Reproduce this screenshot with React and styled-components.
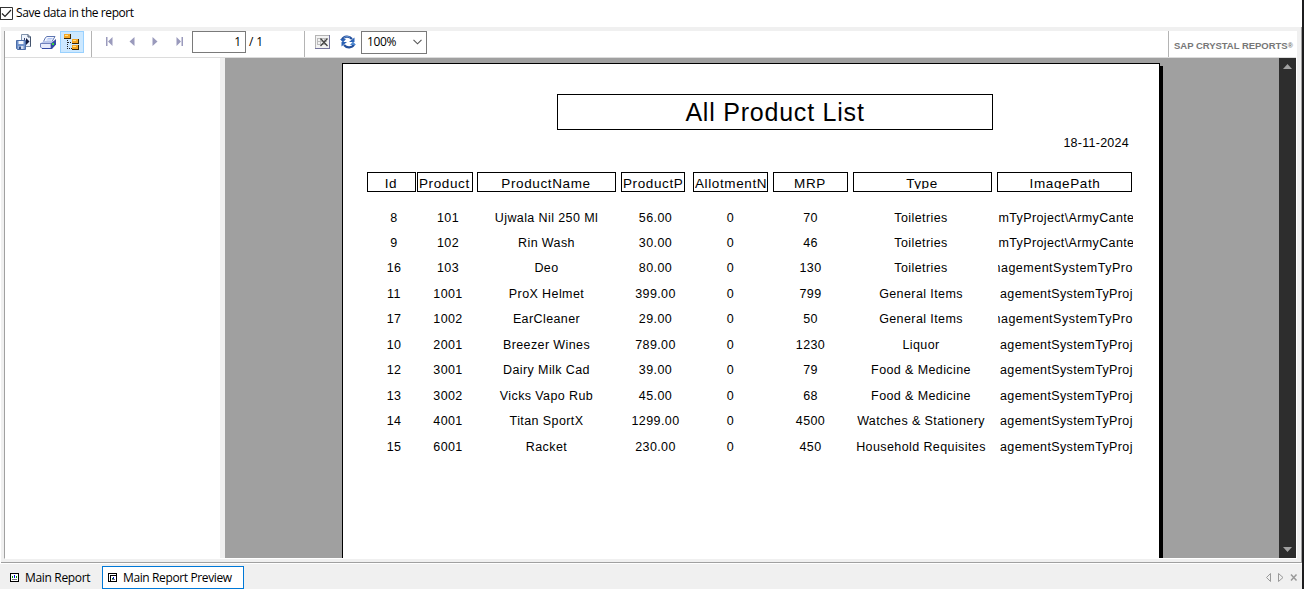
import React from 'react';
import styled, { createGlobalStyle } from 'styled-components';

const Global = createGlobalStyle`
  * { box-sizing: border-box; }
  body { margin: 0; overflow: hidden; background: #fff; }
`;
const ui = `"Open Sans", "Noto Sans", sans-serif`;
const arial = `"Liberation Sans", Arial, sans-serif`;

const Screen = styled.div`
  width: 1304px; height: 589px; display: flex; flex-direction: column;
  border-right: 2px solid #1c1c1e; background: #fff; overflow: hidden;
  font: 12px ${ui}; color: #000;
`;
const Option = styled.label`
  height: 27px; flex: none; display: flex; align-items: center; gap: 3px; padding-bottom: 1px;
  svg { display: block; }
`;
const Label = styled.span`
  white-space: pre; letter-spacing: ${p => p.$ls || 0}px; line-height: 16px;
`;
const Viewer = styled.div`
  height: 536px; flex: none; margin-left: 1px; padding: 4px 4px 3px 3px;
  background: #f0f0f0; border-right: 1px solid #a0a0a0; border-bottom: 1px solid #a0a0a0;
  display: flex; flex-direction: column;
`;
const Inset = styled.div`
  height: 528px; border-left: 1px solid #a0a0a0; border-bottom: 1px solid #fff;
  border-right: 1px solid #fff; display: flex; flex-direction: column;
`;
const Toolbar = styled.div`
  height: 27px; flex: none; background: #fff; border-bottom: 1px solid #dcdcdc;
  display: flex; align-items: stretch;
`;
const Group = styled.div`
  width: ${p => p.$w}px; display: flex; align-items: flex-start;
  padding-left: ${p => p.$pad}px; border-right: 1px solid #b4b4b4;
`;
const Tool = styled.span`
  width: ${p => p.$w || 24}px; height: 22px; display: flex; align-items: center; justify-content: center;
  border: 1px solid ${p => (p.$on ? '#99d1ff' : 'transparent')};
  background: ${p => (p.$on ? '#cce8ff' : 'transparent')};
  svg { display: block; flex: none; }
`;
const Field = styled.span`
  width: ${p => p.$w}px; height: ${p => p.$h}px; border: 1px solid #7a7a7a; background: #fff;
  display: flex; align-items: center; justify-content: ${p => p.$justify};
  padding: 0 4px 1px 5px; margin-right: 3px;
`;
const Pages = styled.span`
  height: 22px; display: flex; align-items: center;
`;
const Brand = styled.div`
  flex: 1; padding: 8px 0 0 5px;
  font: bold 9.5px/13px ${arial}; color: #777; white-space: nowrap; letter-spacing: -.03px;
  sup { font-size: 7px; line-height: 0; vertical-align: 1px; }
`;
const Body = styled.div`
  flex: 1; min-height: 0; display: flex;
`;
const Tree = styled.div`width: 215px; background: #fff;`;
const Splitter = styled.div`width: 5px; background: #f0f0f0;`;
const Canvas = styled.div`
  flex: 1; background: #a0a0a0; padding: 5px 0 0 117px; overflow: hidden;
`;
const Scrollbar = styled.div`
  width: 17px; background: #2d2d2d; display: flex; flex-direction: column;
  justify-content: space-between; align-items: center; padding: 6px 0 6px;
  svg { display: block; }
`;
const Paper = styled.div`
  width: 818px; height: 520px; background: #fff; border: 1px solid #000; border-bottom: 0;
  box-shadow: 3px 3px 0 #000; padding: 30px 0 0 24px; font-family: ${arial};
`;
const Title = styled.div`
  margin-left: 190px; width: 436px; height: 36px; border: 1px solid #000;
  text-align: center; font-size: 25px; line-height: 35px; letter-spacing: .78px;
`;
const PrintDate = styled.div`
  width: 762px; text-align: right; font-size: 12.5px; letter-spacing: .26px;
  height: 42px; line-height: 26px;
`;
const Row = styled.div`
  display: grid; grid-template-columns: 50px 60px 144px 72px 80px 80px 144px 136px;
  height: ${p => p.$h}px;
`;
const HeadCell = styled.div`
  width: ${p => p.$w}px; height: 20px; border: 1px solid #000; padding: 0 1px; display: flex;
  padding-right: ${p => p.$trim || 0}px;
`;
const HeadText = styled.span`
  flex: 1; height: 16px; overflow: hidden; white-space: nowrap;
  text-align: ${p => (p.$cut ? 'left' : 'center')};
  font-size: 13.5px; line-height: 21px; letter-spacing: .62px;
`;
const Rows = styled.div`padding-top: 13.6px;`;
const Cell = styled.div`
  width: ${p => p.$w}px; padding-left: ${p => p.$shift || 0}px; text-align: center;
  white-space: nowrap; font-size: 12.5px; line-height: 25px; letter-spacing: .4px;
`;
const PathCell = styled.div`
  width: 135px; margin-left: 1px; overflow: hidden; white-space: nowrap;
  font-size: 12.5px; line-height: 25px; letter-spacing: ${p => p.$ls}px;
  text-indent: ${p => p.$indent}px;
`;
const Tabs = styled.div`
  flex: 1; background: #f0f0f0; border-top: 1px solid #fff; padding: 2px 4px 0 2px;
  display: flex; align-items: flex-start;
`;
const Tab = styled.div`
  width: ${p => p.$w}px; height: 23px; display: flex; align-items: center; gap: 6px;
  padding-left: ${p => (p.$on ? 5 : 7)}px;
  background: ${p => (p.$on ? '#fff' : 'transparent')};
  border: 1px solid ${p => (p.$on ? '#0078d7' : 'transparent')};
  svg { display: block; }
`;
const TabNav = styled.div`
  margin: 6px 0 0 auto; svg { display: block; }
`;

const columns = [
  { name: 'Id', w: 49, body: 49, shift: 5, trim: 2 },
  { name: 'Product', w: 56, body: 58, shift: 4, cut: true },
  { name: 'ProductName', w: 139, body: 139, trim: 2 },
  { name: 'ProductP', w: 64, body: 65, shift: 4, cut: true },
  { name: 'AllotmentN', w: 75, body: 75, cut: true },
  { name: 'MRP', w: 75, body: 75, trim: 2 },
  { name: 'Type', w: 139, body: 136, trim: 2 },
  { name: 'ImagePath', w: 135, body: 135 },
];
const P1 = ['mTyProject\\ArmyCanteen', 0.5, 0.37];
const P2 = ['nagementSystemTyPro', -4.5, 0.5];
const P3 = ['agementSystemTyProj', 2, 0.37];
const products = [
  ['8', '101', 'Ujwala Nil 250 Ml', '56.00', '0', '70', 'Toiletries', P1],
  ['9', '102', 'Rin Wash', '30.00', '0', '46', 'Toiletries', P1],
  ['16', '103', 'Deo', '80.00', '0', '130', 'Toiletries', P2],
  ['11', '1001', 'ProX Helmet', '399.00', '0', '799', 'General Items', P3],
  ['17', '1002', 'EarCleaner', '29.00', '0', '50', 'General Items', P2],
  ['10', '2001', 'Breezer Wines', '789.00', '0', '1230', 'Liquor', P3],
  ['12', '3001', 'Dairy Milk Cad', '39.00', '0', '79', 'Food & Medicine', P3],
  ['13', '3002', 'Vicks Vapo Rub', '45.00', '0', '68', 'Food & Medicine', P3],
  ['14', '4001', 'Titan SportX', '1299.00', '0', '4500', 'Watches & Stationery', P3],
  ['15', '6001', 'Racket', '230.00', '0', '450', 'Household Requisites', P3],
];

const CheckIcon = () => (
  <svg width="13" height="13" viewBox="0 0 13 13" fill="none">
    <path d="M0 .5H12.5V12.5H0M.5 0V13" stroke="#333" />
    <path d="M2 6.5L5 9.5L11 3" stroke="#222" strokeWidth="1.2" />
  </svg>
);
const ExportIcon = () => (
  <svg width="16" height="16" viewBox="0 0 16 16">
    <path d="M5.5.5H12L14.5 3V12.5H5.5Z" fill="#edf3fc" stroke="#8093ad" />
    <path d="M12 .5V3H15M14.5 3V12.5" fill="none" stroke="#44546e" />
    <path d="M10 4L13.5 7.5L10 11Z" fill="#111b40" />
    <path d="M8 4H9V6H8Z" fill="#3a4a78" />
    <path d="M.5 6.5H9.5V15.5H1.5L.5 14.5Z" fill="#6f92cb" stroke="#4a6ca8" />
    <path d="M2.5 7H7.5V10H2.5Z" fill="#f5f8ff" />
    <path d="M2.5 12H7.5V15H2.5Z" fill="#d5def0" />
    <path d="M3 12.5H5V15H3Z" fill="#304f88" />
  </svg>
);
const PrintIcon = () => (
  <svg width="17" height="13" viewBox="0 0 17 13">
    <path d="M5.5 1.5L7 .5H15L12 5.5H3.5Z" fill="#f4f7ff" stroke="#4d66a8" strokeWidth=".9" />
    <path d="M7.5 2.5H12.5M6.5 4H11.5" stroke="#9db5f0" strokeWidth=".8" />
    <path d="M0 7.5L4 5H14.5L12 7.5Z" fill="#b9c5ea" />
    <path d="M.5 7.5H11V12.5H2L.5 11Z" fill="#e6eafb" stroke="#6f80bc" />
    <path d="M11 7.5L16 3V8.5L12 13H11Z" fill="#3449a4" />
    <path d="M2 12.5H12" stroke="#3449a4" />
    <path d="M12 7H14V9H12Z" fill="#35d53c" />
  </svg>
);
const TreeIcon = () => (
  <svg width="16" height="17" viewBox="0 0 16 17" shapeRendering="crispEdges">
    <path d="M3.5 6V14.5H8M3.5 8.5H8" fill="none" stroke="#222" strokeDasharray="1 1" />
    {[[0, 0], [8, 5], [8, 11]].map(([x, y]) => (
      <g key={`${x}-${y}`}>
        <path d={`M${x} ${y}h7v5h-7z`} fill="#3a2505" />
        <path d={`M${x} ${y}h6v4h-6z`} fill="#f5a623" />
        <path d={`M${x + 1} ${y + 1}h3v1h-3z`} fill="#ffe08c" />
      </g>
    ))}
  </svg>
);
const NavIcon = ({ d }) => (
  <svg width="8" height="10" viewBox="0 0 8 10"><path d={d} fill="#9a9abc" /></svg>
);
const CloseViewIcon = () => (
  <svg width="15" height="14" viewBox="0 0 15 14">
    <path d="M0 0H15V14H0Z" fill="#73739b" />
    <path d="M0 0H14V13H0Z" fill="#b5b5b5" />
    <path d="M1 1H14V13H1Z" fill="#f3f3f3" />
    <path d="M2 3.5H12M2 6.5H12M2 9.5H12M2.5 3V10M5.5 3V10M9.5 3V10" stroke="#bdbdbd" />
    <path d="M5.5 3.5L12.5 11M12.5 3.5L5.5 11" stroke="#444" strokeWidth="1.3" />
  </svg>
);
const RefreshIcon = () => (
  <svg width="16" height="14" viewBox="0 0 16 14">
    <path d="M2 4.5C4 1 9 .5 12 4" stroke="#24509c" strokeWidth="2.2" fill="none" />
    <path d="M0 4H6L3 7.5Z" fill="#2b62b5" />
    <path d="M14.5 2.5V7H9Z" fill="#2b62b5" />
    <path d="M14 9.5C12 13 7 13.5 4 10" stroke="#24509c" strokeWidth="2.2" fill="none" />
    <path d="M16 10H10L13 6.5Z" fill="#4c86cf" />
    <path d="M1.5 11.5V7H7Z" fill="#2b62b5" />
    <path d="M3.5 3C5.5 1.2 8 1.2 10 2.3" stroke="#8db8ec" fill="none" strokeWidth=".7" />
  </svg>
);
const Chevron = () => (
  <svg width="9" height="6" viewBox="0 0 9 6"><path d="M.5.8L4.5 4.8L8.5.8" fill="none" stroke="#555" strokeWidth="1.1" /></svg>
);
const ScrollArrow = ({ down }) => (
  <svg width="9" height="5" viewBox="0 0 9 5"><path d={down ? 'M0 0H9L4.5 5Z' : 'M0 5H9L4.5 0Z'} fill="#a0a0a0" /></svg>
);
const ReportIcon = ({ preview }) => (
  <svg width="9" height="9" viewBox="0 0 9 9" shapeRendering="crispEdges">
    <path d="M.5.5H8.5V8.5H.5Z" fill="#fff" stroke="#000" />
    {preview ? (
      <>
        <path d="M2.5 8V2.5H8" fill="none" stroke="#000" />
        <path d="M4 5H5V6H4Z" fill="#00a000" />
        <path d="M5 4H6V6H5Z" fill="#0000e0" />
        <path d="M4 6H7V7H4Z" fill="#777" />
      </>
    ) : (
      <>
        <path d="M2 3H3V5H2Z" fill="#00a000" />
        <path d="M4 2H5V5H4Z" fill="#0000e0" />
        <path d="M6 3H7V5H6Z" fill="#00a000" />
        <path d="M2 6H7V7H2Z" fill="#777" />
      </>
    )}
  </svg>
);

export default function App() {
  return (
    <Screen>
      <Global />
      <Option><CheckIcon /><Label $ls={-0.43}>Save data in the report</Label></Option>
      <Viewer>
        <Inset>
          <Toolbar>
            <Group $w={87} $pad={7}>
              <Tool><ExportIcon /></Tool>
              <Tool><PrintIcon /></Tool>
              <Tool $on><TreeIcon /></Tool>
            </Group>
            <Group $w={213} $pad={5}>
              <Tool $w={23}><NavIcon d="M1 0H2.5V9H1ZM7.5 0V9L3 4.5Z" /></Tool>
              <Tool $w={23}><NavIcon d="M6.5 0V9L1.5 4.5Z" /></Tool>
              <Tool $w={24}><NavIcon d="M1.5 0V9L6.5 4.5Z" /></Tool>
              <Tool $w={25}><NavIcon d="M5.5 0H7V9H5.5ZM.5 0V9L5 4.5Z" /></Tool>
              <Field $w={54} $h={22} $justify="flex-end"><Label>1</Label></Field>
              <Pages><Label $ls={-0.1}>/ 1</Label></Pages>
            </Group>
            <Group $w={864} $pad={5}>
              <Tool><CloseViewIcon /></Tool>
              <Tool $w={27}><RefreshIcon /></Tool>
              <Field $w={66} $h={23} $justify="space-between"><Label $ls={-0.4}>100%</Label><Chevron /></Field>
            </Group>
            <Brand>SAP CRYSTAL REPORTS<sup>®</sup></Brand>
          </Toolbar>
          <Body>
            <Tree />
            <Splitter />
            <Canvas>
              <Paper>
                <Title>All Product List</Title>
                <PrintDate>18-11-2024</PrintDate>
                <Row $h={20}>
                  {columns.map(c => (
                    <HeadCell key={c.name} $w={c.w} $trim={c.trim}>
                      <HeadText $cut={c.cut}>{c.name}</HeadText>
                    </HeadCell>
                  ))}
                </Row>
                <Rows>
                  {products.map(row => (
                    <Row key={row[0]} $h={25.45}>
                      {row.slice(0, 7).map((text, i) => (
                        <Cell key={i} $w={columns[i].body} $shift={columns[i].shift}>{text}</Cell>
                      ))}
                      <PathCell $indent={row[7][1]} $ls={row[7][2]}>{row[7][0]}</PathCell>
                    </Row>
                  ))}
                </Rows>
              </Paper>
            </Canvas>
            <Scrollbar><ScrollArrow /><ScrollArrow down /></Scrollbar>
          </Body>
        </Inset>
      </Viewer>
      <Tabs>
        <Tab $w={100}><ReportIcon /><Label $ls={-0.33}>Main Report</Label></Tab>
        <Tab $w={142} $on><ReportIcon preview /><Label $ls={-0.38}>Main Report Preview</Label></Tab>
        <TabNav>
          <svg width="32" height="12" viewBox="0 0 32 12" fill="none" stroke="#999">
            <path d="M4.5 1.5V9.5L0.5 5.5Z" />
            <path d="M12.5 1.5V9.5L17 5.5Z" />
            <path d="M25 2.5L30.5 8.5M30.5 2.5L25 8.5" strokeWidth="1.5" />
          </svg>
        </TabNav>
      </Tabs>
    </Screen>
  );
}
